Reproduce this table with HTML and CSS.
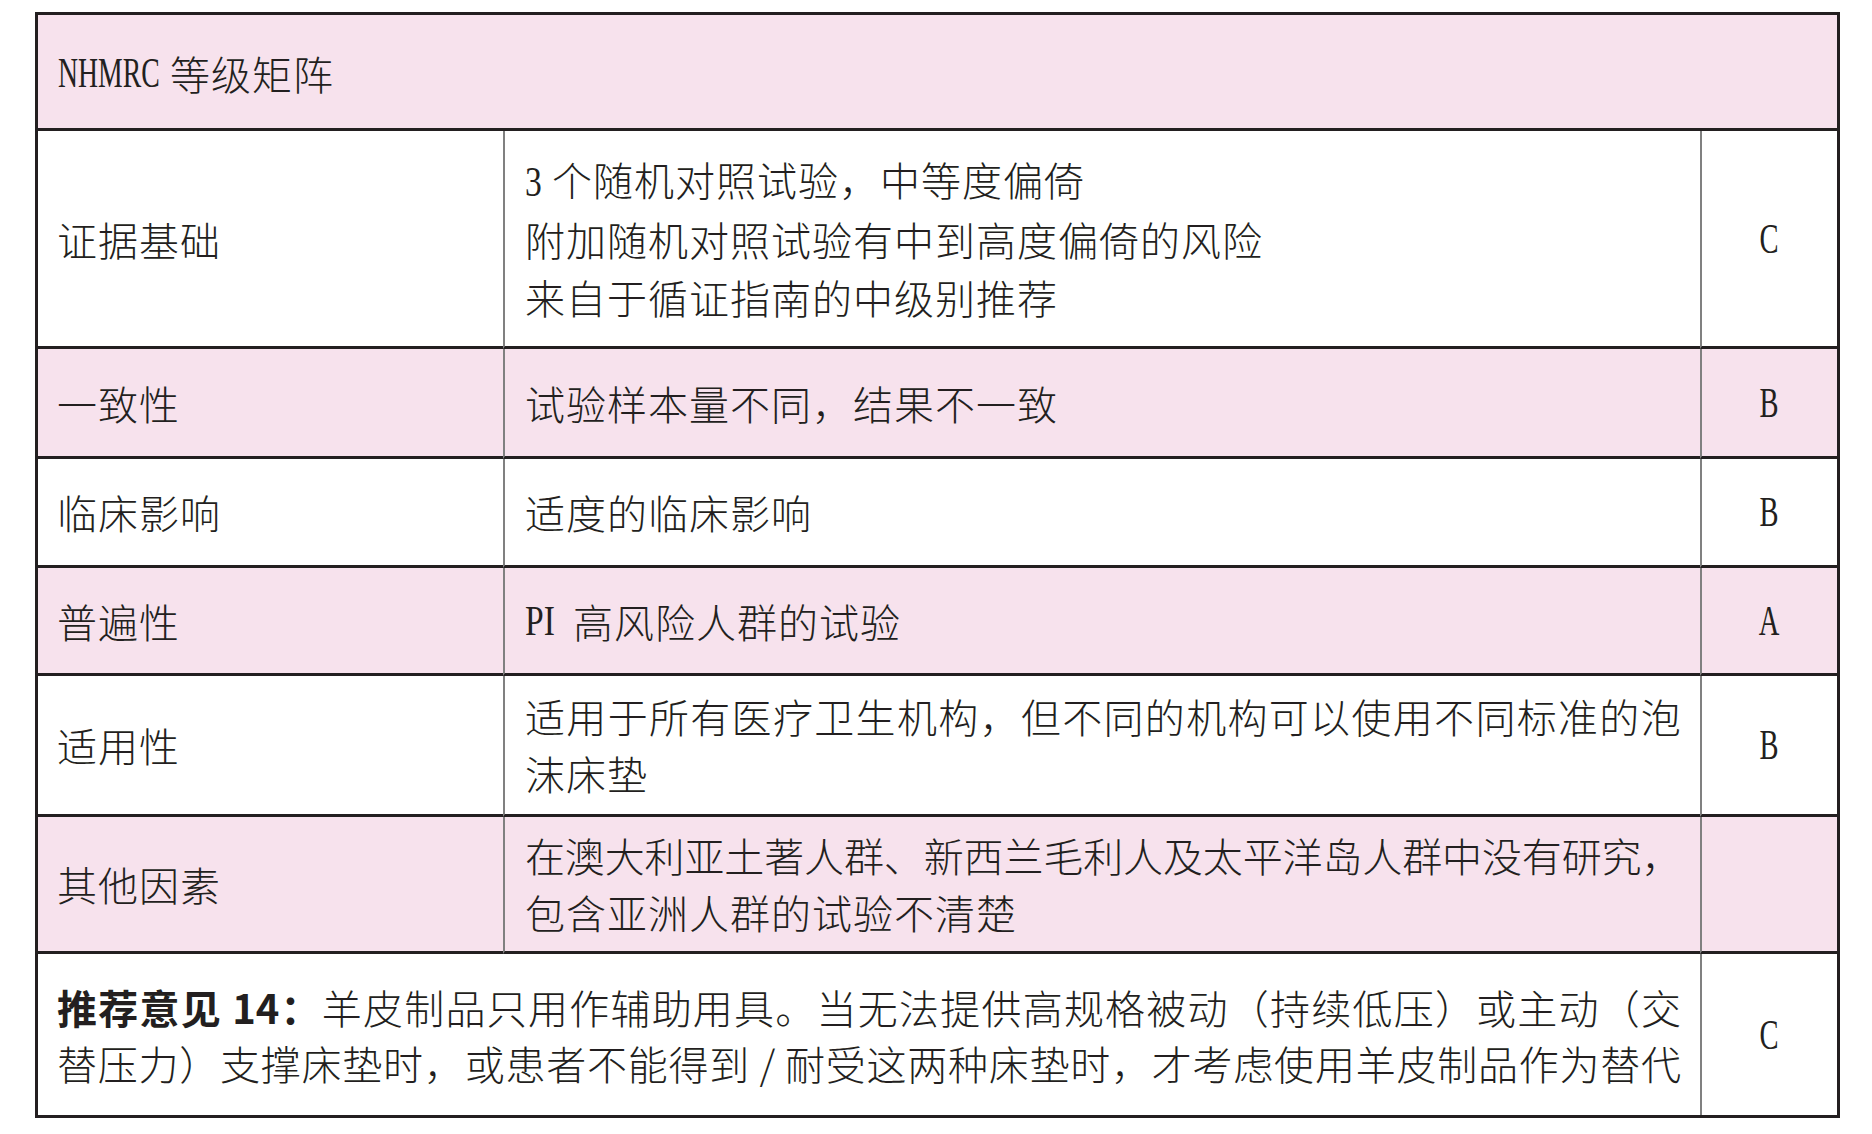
FILE: index.html
```html
<!DOCTYPE html>
<html lang="zh-CN">
<head>
<meta charset="utf-8">
<title>NHMRC 等级矩阵</title>
<link rel="stylesheet" href="styles.css">
</head>
<body>
<div class="page">
  <div class="matrix">
    <div class="cell head span3 pink"><span class="lat w-nhmrc"><span class="sq">NHMRC</span></span>等级矩阵</div>

    <div class="cell c1">证据基础</div>
    <div class="cell c2">
      <div class="lines">
        <div><span class="lat w-3"><span class="sq wide">3</span></span>个随机对照试验，中等度偏倚</div>
        <div>附加随机对照试验有中到高度偏倚的风险</div>
        <div>来自于循证指南的中级别推荐</div>
      </div>
    </div>
    <div class="cell c3"><span class="grade">C</span></div>

    <div class="cell c1 pink">一致性</div>
    <div class="cell c2 pink">试验样本量不同，结果不一致</div>
    <div class="cell c3 pink"><span class="grade">B</span></div>

    <div class="cell c1">临床影响</div>
    <div class="cell c2">适度的临床影响</div>
    <div class="cell c3"><span class="grade">B</span></div>

    <div class="cell c1 pink">普遍性</div>
    <div class="cell c2 pink"><span class="lat w-pi"><span class="sq wide">PI</span></span>高风险人群的试验</div>
    <div class="cell c3 pink"><span class="grade">A</span></div>

    <div class="cell c1">适用性</div>
    <div class="cell c2">
      <div class="lines">
        <div class="full">适用于所有医疗卫生机构，但不同的机构可以使用不同标准的泡</div>
        <div>沫床垫</div>
      </div>
    </div>
    <div class="cell c3"><span class="grade">B</span></div>

    <div class="cell c1 pink">其他因素</div>
    <div class="cell c2 pink">
      <div class="lines">
        <div class="full tight">在澳大利亚土著人群、新西兰毛利人及太平洋岛人群中没有研究，</div>
        <div>包含亚洲人群的试验不清楚</div>
      </div>
    </div>
    <div class="cell c3 pink"></div>

    <div class="cell rec last span2">
      <div class="lines rec-lines">
        <div class="full"><b>推荐意见 14：</b>羊皮制品只用作辅助用具。当无法提供高规格被动（持续低压）或主动（交</div>
        <div class="full">替压力）支撑床垫时，或患者不能得到 / 耐受这两种床垫时，才考虑使用羊皮制品作为替代</div>
      </div>
    </div>
    <div class="cell c3 last"><span class="grade">C</span></div>
  </div>
</div>
</body>
</html>
```

FILE: styles.css
```css
html, body {
  margin: 0;
  padding: 0;
  background: #ffffff;
}

body {
  font-family: "Noto Sans CJK SC", "Noto Sans", sans-serif;
  font-weight: 300;
  font-size: 40px;
  color: #231f20;
  letter-spacing: 1px;
}

.page {
  padding: 12px 0 0 35px;
}

.matrix {
  box-sizing: border-box;
  width: 1805px;
  display: grid;
  grid-template-columns: 465px 1197px 137px;
  grid-template-rows: 116px 218px 110px 109px 108px 141px 137px 161px;
  border: 3px solid #231f20;
}

.cell {
  box-sizing: border-box;
  display: flex;
  align-items: center;
  border-bottom: 3px solid #231f20;
  min-width: 0;
}

.cell.last {
  border-bottom: none;
}

.pink {
  background: #f7e2ed;
}

.span3 {
  grid-column: span 3;
}

.span2 {
  grid-column: span 2;
}

.head {
  padding-left: 20px;
  padding-top: 2px;
}

.c1 {
  padding-left: 19px;
}

.c2 {
  border-left: 2px solid #808080;
  padding-left: 20px;
  padding-right: 19px;
}

.c3 {
  border-left: 2px solid #808080;
  justify-content: center;
}

.rec {
  padding-left: 19px;
  padding-right: 19px;
  padding-top: 0;
}

.lines {
  width: 100%;
  line-height: 57.5px;
}

.rec-lines {
  line-height: 56px;
}

.full {
  text-align: justify;
  text-align-last: justify;
  letter-spacing: 0.3px;
}

.full.tight {
  letter-spacing: -0.4px;
}

.rec .full {
  letter-spacing: 0;
}

.rec b {
  font-weight: 700;
}

.lat {
  display: inline-block;
  font-family: "Liberation Serif", serif;
  font-weight: 400;
  font-size: 42px;
  letter-spacing: 0;
  white-space: nowrap;
}

.lat .sq {
  display: inline-block;
  transform: scaleX(0.66);
  transform-origin: left center;
}

.lat .sq.wide {
  transform: scaleX(0.8);
}

.w-nhmrc {
  width: 112px;
}

.w-3 {
  width: 27px;
}

.w-pi {
  width: 48px;
}

.grade {
  display: inline-block;
  font-family: "Liberation Serif", serif;
  font-weight: 400;
  font-size: 42px;
  letter-spacing: 0;
  transform: scaleX(0.68);
}
```
